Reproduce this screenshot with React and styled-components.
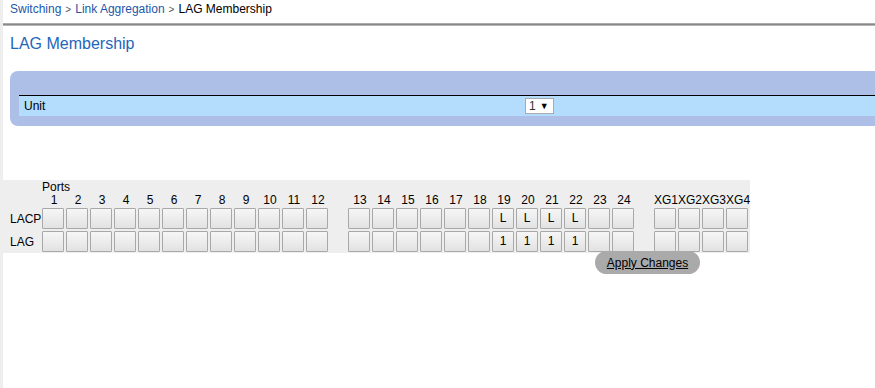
import React from "react";
import styled, { createGlobalStyle } from "styled-components";

const GlobalStyle = createGlobalStyle`
  body {
    margin: 0;
    background: #fff;
    font-family: "Liberation Sans", Arial, sans-serif;
    font-size: 12px;
    color: #000;
  }
`;

const Page = styled.div`
  width: 875px;
  height: 388px;
  overflow: hidden;
  border-left: 3px solid #eeeeee;
  box-sizing: border-box;
`;

const Breadcrumb = styled.div`
  height: 23px;
  padding-left: 7px;
  line-height: 19px;
  font-size: 12px;
`;

const Crumb = styled.span`
  color: ${p => (p.$current ? "#000" : "#2356a8")};
`;

const Sep = styled.span`
  color: #555;
  margin: 0 4px;
  font-size: 10px;
`;

const Divider = styled.div`
  height: 3px;
  margin-left: -3px;
  background: linear-gradient(#bbb, #888, #ccc);
`;

const Title = styled.h1`
  margin: 0;
  padding: 8px 0 0 7px;
  font-size: 16px;
  font-weight: normal;
  color: #2266bb;
  line-height: 20px;
`;

const Panel = styled.div`
  margin: 17px 0 0 7px;
  padding: 24px 0 10px 9px;
  background: #adbfe6;
  border-radius: 8px 0 0 8px;
`;

const PanelRow = styled.div`
  display: flex;
  align-items: center;
  height: 20px;
  border-top: 1px solid #000;
  background: #b4dcfc;
`;

const RowLabel = styled.div`
  width: 501px;
  padding-left: 5px;
`;

const Select = styled.div`
  display: flex;
  align-items: center;
  gap: 4px;
  width: 24px;
  height: 14px;
  padding-left: 3px;
  background: #fff;
  border: 1px solid #aaa;
  font-size: 12px;
  color: #333;
  span {
    font-size: 9px;
    color: #000;
  }
`;

const GridBox = styled.div`
  width: fit-content;
  margin-top: 54px;
  padding-left: 7px;
  background: #eeeeee;
`;

const Table = styled.table`
  border-collapse: collapse;
  border-spacing: 0;
  font-size: 12px;
  td {
    padding: 0;
  }
`;

const LabelCell = styled.td`
  width: 32px;
  text-align: left;
  white-space: nowrap;
`;

const HeadCell = styled.td`
  width: 24px;
  text-align: center;
  height: 13px;
  line-height: 13px;
`;

const Gap = styled.td`
  width: 18px;
  min-width: 18px;
`;

const PortBox = styled.div`
  width: 22px;
  height: 21px;
  margin: 1px 1px 1px 0;
  box-sizing: border-box;
  border: 1px solid #a8a8a8;
  border-radius: 1px;
  background: linear-gradient(#f6f6f6, #e2e2e2);
  text-align: center;
  line-height: 19px;
  font-size: 12px;
`;

const Footer = styled.div`
  display: flex;
  padding-left: 592px;
  margin-top: -2px;
`;

const ApplyButton = styled.button`
  width: 105px;
  height: 23px;
  border: none;
  border-radius: 12px;
  background: #aaaaaa;
  font-family: "Liberation Sans", Arial, sans-serif;
  font-size: 12px;
  text-decoration: underline;
  color: #000;
  padding: 0;
`;

const groupA = Array.from({ length: 12 }, (_, i) => String(i + 1));
const groupB = Array.from({ length: 12 }, (_, i) => String(i + 13));
const groupC = ["XG1", "XG2", "XG3", "XG4"];

const lacp = { 19: "L", 20: "L", 21: "L", 22: "L" };
const lag = { 19: "1", 20: "1", 21: "1", 22: "1" };

function PortRow({ label, values }) {
  const cell = p => (
    <td key={p}>
      <PortBox>{values[p] || ""}</PortBox>
    </td>
  );
  return (
    <tr>
      <LabelCell>{label}</LabelCell>
      {groupA.map(cell)}
      <Gap />
      {groupB.map(cell)}
      <Gap />
      {groupC.map(cell)}
    </tr>
  );
}

export default function App() {
  return (
    <>
      <GlobalStyle />
      <Page>
        <Breadcrumb>
          <Crumb>Switching</Crumb>
          <Sep>&gt;</Sep>
          <Crumb>Link Aggregation</Crumb>
          <Sep>&gt;</Sep>
          <Crumb $current>LAG Membership</Crumb>
        </Breadcrumb>
        <Divider />
        <Title>LAG Membership</Title>
        <Panel>
          <PanelRow>
            <RowLabel>Unit</RowLabel>
            <Select>
              1<span>▼</span>
            </Select>
          </PanelRow>
        </Panel>
        <GridBox>
          <Table>
            <tbody>
              <tr>
                <LabelCell />
                <LabelCell colSpan={3}>Ports</LabelCell>
              </tr>
              <tr>
                <LabelCell />
                {groupA.map(p => <HeadCell key={p}>{p}</HeadCell>)}
                <Gap />
                {groupB.map(p => <HeadCell key={p}>{p}</HeadCell>)}
                <Gap />
                {groupC.map(p => <HeadCell key={p}>{p}</HeadCell>)}
              </tr>
              <PortRow label="LACP" values={lacp} />
              <PortRow label="LAG" values={lag} />
            </tbody>
          </Table>
        </GridBox>
        <Footer>
          <ApplyButton>Apply Changes</ApplyButton>
        </Footer>
      </Page>
    </>
  );
}
